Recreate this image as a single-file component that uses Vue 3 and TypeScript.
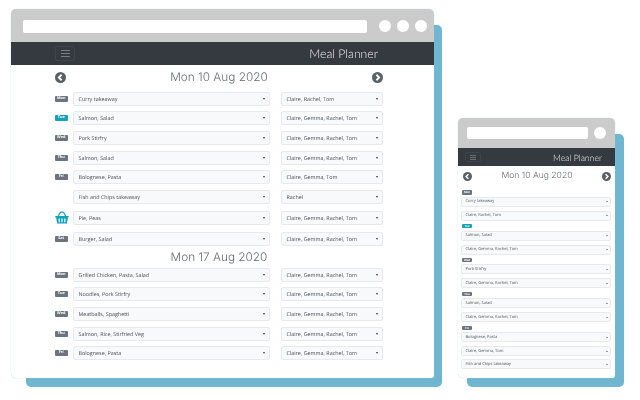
<script setup lang="ts">
interface Row { day?: string; tone?: 'today'; basket?: boolean; meal: string; who: string; cls?: string }
const CGRT = 'Claire, Gemma, Rachel, Tom'
const week1: Row[] = [
  { day: 'Mon', meal: 'Curry takeaway', who: 'Claire, Rachel, Tom' },
  { day: 'Tue', tone: 'today', meal: 'Salmon, Salad', who: CGRT },
  { day: 'Wed', meal: 'Pork Stirfry', who: CGRT },
  { day: 'Thu', meal: 'Salmon, Salad', who: CGRT },
  { day: 'Fri', meal: 'Bolognese, Pasta', who: 'Claire, Gemma, Tom' },
  { meal: 'Fish and Chips takeaway', who: 'Rachel', cls: 'wide' },
  { basket: true, meal: 'Pie, Peas', who: CGRT, cls: 'wide' },
  { day: 'Sat', meal: 'Burger, Salad', who: CGRT },
]
const week2: Row[] = [
  { day: 'Mon', meal: 'Grilled Chicken, Pasta, Salad', who: CGRT },
  { day: 'Tue', meal: 'Noodles, Pork Stirfry', who: CGRT },
  { day: 'Wed', meal: 'Meatballs, Spaghetti', who: CGRT },
  { day: 'Thu', meal: 'Salmon, Rice, Stirfried Veg', who: CGRT },
  { day: 'Fri', meal: 'Bolognese, Pasta', who: CGRT },
]
const phone: Row[] = [
  { day: 'Mon', meal: 'Curry takeaway', who: 'Claire, Rachel, Tom' },
  { day: 'Tue', tone: 'today', meal: 'Salmon, Salad', who: CGRT },
  { day: 'Wed', meal: 'Pork Stirfry', who: CGRT },
  { day: 'Thu', meal: 'Salmon, Salad', who: CGRT },
  { day: 'Fri', meal: 'Bolognese, Pasta', who: 'Claire, Gemma, Tom' },
]
const weeks = [
  { title: 'Mon 17 Aug 2020', rows: week2 },
]
</script>

<template>
  <div class="canvas">
    <div class="backing backing-lg"></div>
    <section class="window window-lg">
      <div class="chrome">
        <div class="url"></div>
        <span class="dot"></span><span class="dot"></span><span class="dot"></span>
      </div>
      <nav class="navbar">
        <button class="toggler" aria-label="Menu"><i></i><i></i><i></i></button>
        <span class="brand">Meal Planner</span>
      </nav>
      <main class="content">
        <header class="datehead">
          <svg class="nav-ic" viewBox="0 0 12 12"><circle cx="6" cy="6" r="6" /><path d="M7.2 3 4.2 6l3 3" /></svg>
          <h2>Mon 10 Aug 2020</h2>
          <svg class="nav-ic" viewBox="0 0 12 12"><circle cx="6" cy="6" r="6" /><path d="M4.8 3l3 3-3 3" /></svg>
        </header>
        <div v-for="(r, i) in week1" :key="i" class="row" :class="r.cls">
          <div class="marker">
            <span v-if="r.day" class="badge" :class="r.tone">{{ r.day }}</span>
            <svg v-else-if="r.basket" class="basket" viewBox="0 0 14 13">
              <path class="handle" d="M3 5.5 5.6 1.2M11 5.5 8.4 1.2M5.6 1.2h2.8" />
              <path class="body" d="M.3 5h13.4v1.6h-.8l-1 6H2.1l-1-6H.3z" />
              <path class="slots" d="M4.2 7.6v3.6M7 7.6v3.6M9.8 7.6v3.6" />
            </svg>
          </div>
          <div class="select"><span>{{ r.meal }}</span><b></b></div>
          <div class="select"><span>{{ r.who }}</span><b></b></div>
        </div>
        <template v-for="w in weeks" :key="w.title">
          <h2 class="subhead">{{ w.title }}</h2>
          <div v-for="(r, i) in w.rows" :key="i" class="row">
            <div class="marker"><span class="badge">{{ r.day }}</span></div>
            <div class="select"><span>{{ r.meal }}</span><b></b></div>
            <div class="select"><span>{{ r.who }}</span><b></b></div>
          </div>
        </template>
      </main>
    </section>

    <div class="backing backing-sm"></div>
    <section class="window window-sm">
      <div class="chrome">
        <div class="url"></div>
        <span class="dot"></span>
      </div>
      <nav class="navbar">
        <button class="toggler" aria-label="Menu"><i></i><i></i><i></i></button>
        <span class="brand">Meal Planner</span>
      </nav>
      <main class="content">
        <header class="datehead">
          <svg class="nav-ic" viewBox="0 0 12 12"><circle cx="6" cy="6" r="6" /><path d="M7.2 3 4.2 6l3 3" /></svg>
          <h2>Mon 10 Aug 2020</h2>
          <svg class="nav-ic" viewBox="0 0 12 12"><circle cx="6" cy="6" r="6" /><path d="M4.8 3l3 3-3 3" /></svg>
        </header>
        <div v-for="(r, i) in phone" :key="i" class="stack">
          <span class="badge" :class="r.tone">{{ r.day }}</span>
          <div class="select"><span>{{ r.meal }}</span><b></b></div>
          <div class="select"><span>{{ r.who }}</span><b></b></div>
        </div>
        <div class="select"><span>Fish and Chips takeaway</span><b></b></div>
      </main>
    </section>
  </div>
</template>

<style scoped>
.canvas {
  position: relative;
  width: 640px;
  height: 400px;
  overflow: hidden;
  background: #fff;
  font-family: "Open Sans", "Liberation Sans", sans-serif;
  text-rendering: geometricPrecision;
  filter: blur(0.3px);
}
.backing {
  position: absolute;
  background: #6fb6d1;
  border-radius: 5px;
}
.backing-lg { left: 26px; top: 25px; width: 416px; height: 362px; }
.backing-sm { left: 467px; top: 134px; width: 157px; height: 253px; }
.window {
  position: absolute;
  display: flex;
  flex-direction: column;
  background: #fff;
  border-radius: 5px 5px 3px 5px;
  overflow: hidden;
  box-shadow: 0 0 1px #8ccbe2;
}
.window-lg { left: 11px; top: 9px; width: 423px; height: 369px; }
.window-sm { left: 458px; top: 118px; width: 157px; height: 260px; }

.chrome {
  display: flex;
  align-items: center;
  background: #cbcbcb;
  flex: none;
}
.url { background: #fff; border-radius: 2px; }
.dot { background: #fff; border-radius: 50%; flex: none; }
.window-lg .chrome { height: 32px; padding: 1px 0 0 12px; gap: 6px; }
.window-lg .url { width: 344px; height: 13px; margin-right: 6px; }
.window-lg .dot { width: 12px; height: 12px; }
.window-sm .chrome { height: 30px; padding: 0 0 0 9px; gap: 6px; }
.window-sm .url { width: 121px; height: 12px; }
.window-sm .dot { width: 12px; height: 12px; }

.navbar {
  display: flex;
  align-items: center;
  justify-content: space-between;
  background: #343a40;
  flex: none;
  box-sizing: border-box;
}
.window-lg .navbar { height: 23px; padding: 0 56px 0 44px; }
.window-sm .navbar { height: 18px; padding: 0 13px 0 7px; }
.toggler {
  display: flex;
  flex-direction: column;
  align-items: center;
  justify-content: center;
  padding: 0;
  background: transparent;
  border: 1px solid rgba(255, 255, 255, 0.06);
  border-radius: 2px;
}
.toggler i { display: block; background: #7b7f83; }
.window-lg .toggler { width: 20px; height: 15px; gap: 2px; }
.window-lg .toggler i { width: 9px; height: 1px; }
.window-sm .toggler { width: 16px; height: 10px; gap: 1px; }
.window-sm .toggler i { width: 6px; height: 1px; background: #6a6f74; }
.brand { color: #eef0f1; font-family: "Lato", sans-serif; font-weight: 300; white-space: nowrap; }
.window-lg .brand { font-size: 12.2px; }
.window-sm .brand { font-size: 8.7px; }

.content { flex: 1; min-height: 0; }
.window-lg .content { padding: 6px 51px 0 44px; }
.window-sm .content { padding: 5px 4px 0 3px; }

.datehead { display: flex; align-items: center; justify-content: space-between; }
h2 {
  margin: 0;
  font-family: "Inter", sans-serif;
  font-weight: 300;
  color: #666b70;
  white-space: nowrap;
}
.nav-ic { display: block; flex: none; }
.nav-ic circle { fill: #596067; }
.nav-ic path { fill: none; stroke: #fff; stroke-width: 2; }
.window-lg .datehead { height: 12px; margin-bottom: 8.5px; }
.window-lg h2 { font-size: 11.8px; line-height: 14px; }
.window-lg .nav-ic { width: 11px; height: 11px; }
.window-sm .datehead { height: 10px; margin: 0 0 9px 2px; }
.window-sm h2 { font-size: 8.6px; line-height: 10px; }
.window-sm .nav-ic { width: 9px; height: 9px; }

.row {
  display: grid;
  grid-template-columns: 18px 197px 113px;
  height: 14px;
  margin-bottom: 5.7px;
  align-items: center;
}
.row .select + .select { margin-left: 11px; width: 102px; }
.row.wide { margin-bottom: 6.8px; }
.window-lg h2.subhead {
  box-sizing: border-box;
  text-align: center;
  height: 16px;
  margin: -3px 0 3.3px;
  padding-top: 2px;
}
.marker { display: flex; align-items: center; }
.badge {
  display: block;
  box-sizing: border-box;
  background: #6c757d;
  color: #fff;
  border-radius: 1px;
  text-align: center;
  font-weight: 700;
  overflow: hidden;
}
.badge.today { background: #17a2b8; }
.window-lg .badge { width: 12.5px; height: 6px; font-size: 3.8px; line-height: 6.6px; }
.window-sm .badge { width: 10px; height: 4.5px; font-size: 2.8px; line-height: 5px; }
.basket { display: block; width: 14px; height: 13px; }
.basket .handle { fill: none; stroke: #17a2b8; stroke-width: 1.3; }
.basket .body { fill: #17a2b8; }
.basket .slots { fill: none; stroke: #fff; stroke-width: 1.2; }

.select {
  display: flex;
  align-items: center;
  justify-content: space-between;
  box-sizing: border-box;
  background: #f8f9fa;
  border: 1px solid #e7e9eb;
  border-radius: 2px;
  color: #495057;
  white-space: nowrap;
}
.select b {
  width: 0;
  height: 0;
  flex: none;
  border-style: solid;
  border-color: #343a40 transparent transparent;
}
.window-lg .select { height: 14px; padding: 0 4.5px; font-size: 5.4px; }
.window-lg .select b { border-width: 2px 1.8px 0; }
.window-sm .select { height: 10px; padding: 0 2.5px 0 3.5px; font-size: 4px; }
.window-sm .select b { border-width: 1.5px 1.2px 0; }

.stack { display: flex; flex-direction: column; align-items: flex-start; }
.stack .select { width: 100%; }
.stack .badge { margin: 0 0 2.2px 1px; }
.stack .select + .select { margin: 4px 0 3.2px; }
</style>
